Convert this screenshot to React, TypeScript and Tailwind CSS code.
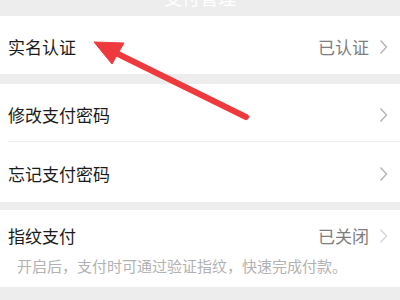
import React from "react";

const Chevron = ({ light }: { light?: boolean }) => (
  <svg width="9" height="16" viewBox="0 0 9 16" className="ml-[10px]">
    <path d="M1.5 1.5 L7.5 8 L1.5 14.5" fill="none" stroke={light ? "#d6d6d6" : "#b4b4b4"} strokeWidth="1.4" />
  </svg>
);

const Row = ({ title, value, divider, light }: { title: string; value?: string; divider?: boolean; light?: boolean }) => (
  <div className="relative flex items-center h-full pl-[8px] pr-[12px] bg-white">
    <span className="text-[17px] text-[#1b1b1b] pt-[3px]">{title}</span>
    <div className="ml-auto flex items-center pt-[3px]">
      {value && <span className="text-[17px] text-[#7e7e7e]">{value}</span>}
      <Chevron light={light} />
    </div>
    {divider && <div className="absolute left-[8px] right-0 bottom-0 h-px bg-[#efefef]" />}
  </div>
);

export default function App() {
  return (
    <div
      className="relative w-[400px] h-[300px] overflow-hidden bg-[#ededed]"
      style={{ fontFamily: '"Noto Sans CJK SC", "Noto Sans", sans-serif' }}
    >
      <div className="h-[16px] flex items-end justify-center overflow-hidden">
        <span className="text-[18px] leading-[18px] text-white mb-[10px]">支付管理</span>
      </div>
      <div className="h-[58px]">
        <Row title="实名认证" value="已认证" />
      </div>
      <div className="h-[10px]" />
      <div className="h-[58px]">
        <Row title="修改支付密码" divider />
      </div>
      <div className="h-[60px]">
        <Row title="忘记支付密码" />
      </div>
      <div className="h-[8px]" />
      <div className="h-[77px] bg-white flex flex-col">
        <div className="flex items-center h-[46px] pl-[8px] pr-[12px] pt-[6px]">
          <span className="text-[17px] text-[#1b1b1b]">指纹支付</span>
          <div className="ml-auto flex items-center">
            <span className="text-[17px] text-[#7e7e7e]">已关闭</span>
            <Chevron light />
          </div>
        </div>
        <div className="pl-[17px] text-[15px] leading-[20px] text-[#b2b2b2]">开启后，支付时可通过验证指纹，快速完成付款。</div>
      </div>

      <svg className="absolute left-0 top-0" width="400" height="300" viewBox="0 0 400 300">
        <line x1="246" y1="117" x2="116" y2="53" stroke="#ee3a3d" strokeWidth="6" strokeLinecap="round" />
        <polygon points="94,42 124,43 112,64" fill="#ee3a3d" strokeLinejoin="round" stroke="#ee3a3d" strokeWidth="1" />
      </svg>
    </div>
  );
}
